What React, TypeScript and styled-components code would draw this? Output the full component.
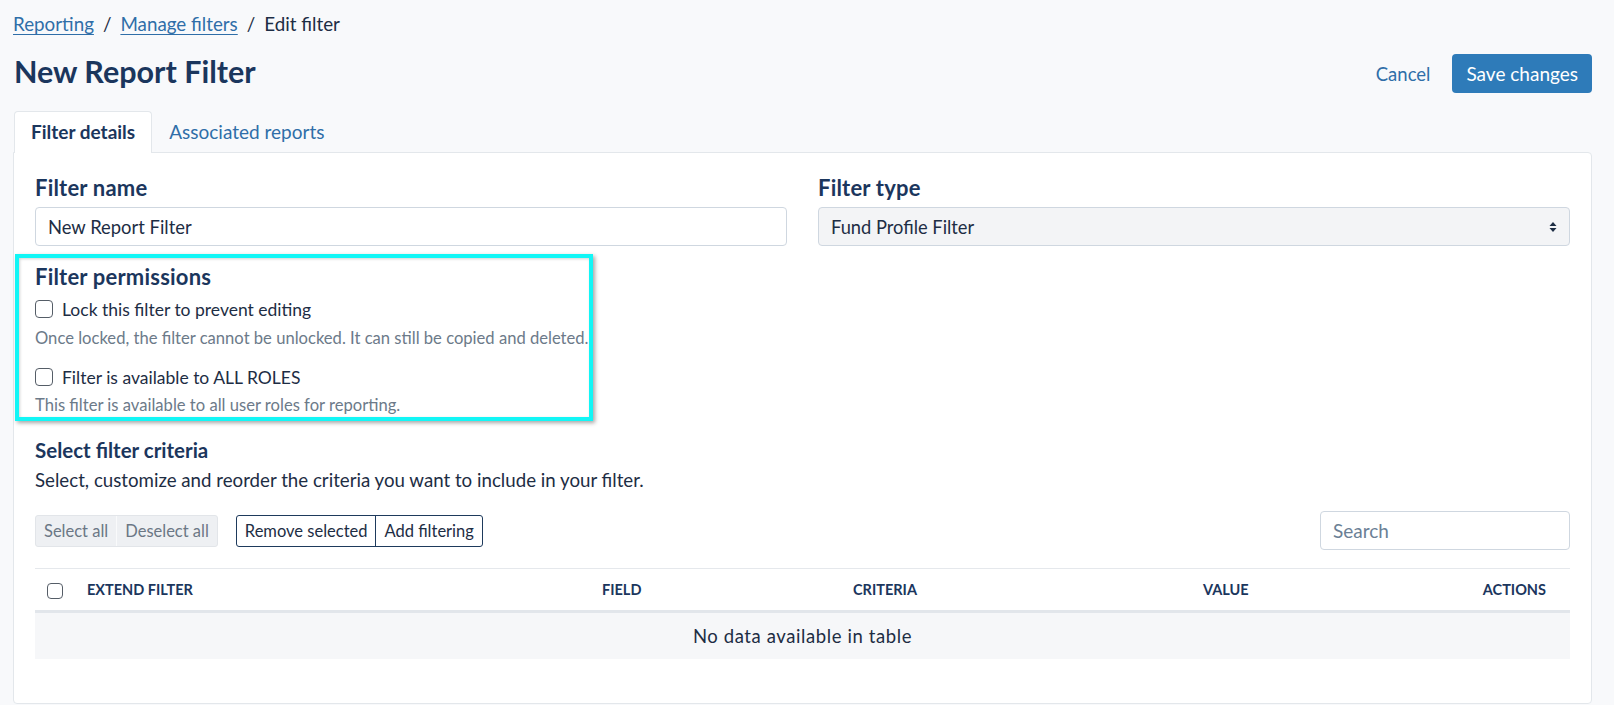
import React from 'react';
import styled, { createGlobalStyle } from 'styled-components';

const navy = '#1b365d';
const ink = '#1d2d44';
const link = '#2f6ea8';
const muted = '#6c7a89';
const line = '#e3e7eb';

const GlobalStyle = createGlobalStyle`
  body {
    margin: 0;
    background: #f8f9fb;
    font-family: Lato, "Open Sans", Arial, sans-serif;
    color: ${ink};
  }
  * {
    box-sizing: border-box;
  }
`;

const Page = styled.div`
  padding: 13px 22px 0 13px;
`;

const Crumbs = styled.nav`
  font-size: 18.8px;
  line-height: 22px;
  color: ${ink};
`;

const CrumbLink = styled.a`
  color: ${link};
  text-decoration: underline;
  text-underline-offset: 3px;
`;

const CrumbSep = styled.span`
  margin: 0 9px;
`;

const HeaderRow = styled.div`
  display: flex;
  justify-content: space-between;
  align-items: flex-start;
  margin-top: 18px;
`;

const Title = styled.h1`
  margin: 0;
  padding-left: 1px;
  font-size: 30.5px;
  line-height: 36px;
  font-weight: 700;
  color: ${navy};
`;

const Actions = styled.div`
  display: flex;
  align-items: center;
  gap: 22px;
  margin-top: 1px;
`;

const LinkButton = styled.button`
  border: 0;
  background: none;
  padding: 0;
  font: inherit;
  font-size: 18.5px;
  color: ${link};
  cursor: pointer;
`;

const PrimaryButton = styled.button`
  height: 39px;
  padding: 0 14px;
  border: 0;
  border-radius: 4px;
  background: #2e7bb9;
  color: #fff;
  font: inherit;
  font-size: 19px;
  cursor: pointer;
`;

const TabBar = styled.div`
  display: flex;
  margin-top: 18px;
  padding-left: 1px;
`;

const Tab = styled.div<{ $active?: boolean }>`
  position: relative;
  z-index: 1;
  height: 42px;
  margin-bottom: -1px;
  padding: 0 16px;
  line-height: 40px;
  font-size: 19px;
  border: 1px solid ${({ $active }) => ($active ? line : 'transparent')};
  border-bottom: 0;
  border-radius: 4px 4px 0 0;
  background: ${({ $active }) => ($active ? '#fff' : 'transparent')};
  color: ${({ $active }) => ($active ? navy : link)};
  font-weight: ${({ $active }) => ($active ? 700 : 400)};
`;

const Panel = styled.div`
  background: #fff;
  border: 1px solid ${line};
  border-radius: 0 4px 4px 4px;
  padding: 23px 21px 44px;
`;

const FieldRow = styled.div`
  display: grid;
  grid-template-columns: 1fr 1fr;
  column-gap: 31px;
`;

const Label = styled.div<{ $gap?: number }>`
  font-size: 22px;
  letter-spacing: 0.2px;
  line-height: 24px;
  font-weight: 700;
  color: ${navy};
  margin-bottom: ${({ $gap = 7 }) => $gap}px;
`;

const TextInput = styled.input`
  width: 100%;
  height: 39px;
  padding: 0 12px;
  border: 1px solid #cfd7e0;
  border-radius: 4px;
  background: #fff;
  font: inherit;
  font-size: 18.4px;
  color: ${ink};
  outline: none;

  &::placeholder {
    color: #6b7f95;
  }
`;

const SelectBox = styled.div`
  display: flex;
  align-items: center;
  justify-content: space-between;
  height: 39px;
  padding: 0 12px;
  border: 1px solid #cfd7e0;
  border-radius: 4px;
  background: #f3f4f6;
  font-size: 18.3px;
  color: ${ink};
`;

/* cyan outline drawn around the permissions block */
const Highlight = styled.div`
  width: 578px;
  margin: 8px 0 0 -20px;
  padding: 7px 0 2px 16px;
  border: 4px solid #12f6f6;
  box-shadow: 2px 2px 4px rgba(0, 0, 0, 0.35), inset 1px 1px 3px rgba(0, 0, 0, 0.18);
`;

const CheckRow = styled.label<{ $top: number }>`
  display: flex;
  align-items: center;
  gap: 9px;
  height: 24px;
  font-size: 17.5px;
  color: ${ink};
  margin-top: ${({ $top }) => $top}px;
`;

const Box = styled.span<{ $size: number }>`
  display: inline-block;
  flex: none;
  width: ${({ $size }) => $size}px;
  height: ${({ $size }) => $size}px;
  border: 1.5px solid #555d67;
  border-radius: 4px;
  background: #fff;
  vertical-align: middle;
`;

const Help = styled.div<{ $top: number }>`
  margin-top: ${({ $top }) => $top}px;
  font-size: 16.6px;
  line-height: 20px;
  color: ${muted};
`;

const SectionTitle = styled.div`
  margin-top: 18px;
  font-size: 20.5px;
  line-height: 22px;
  font-weight: 700;
  color: ${navy};
`;

const Lead = styled.p`
  margin: 7px 0 0;
  font-size: 18.7px;
  line-height: 24px;
  color: ${ink};
`;

const Toolbar = styled.div`
  display: flex;
  align-items: center;
  gap: 18px;
  height: 39px;
  margin-top: 19px;
`;

const Group = styled.div<{ $outlined?: boolean }>`
  display: flex;
  height: 32px;
  border: 1px solid ${({ $outlined }) => ($outlined ? '#1e3a5c' : '#e2e5e9')};
  border-radius: 3px;
  overflow: hidden;
  background: ${({ $outlined }) => ($outlined ? '#fff' : '#eef0f3')};
`;

const GroupButton = styled.button<{ $outlined?: boolean; $divider?: boolean }>`
  height: 100%;
  padding: 0 8px;
  border: 0;
  border-left: ${({ $divider, $outlined }) =>
    $divider ? `1px solid ${$outlined ? '#1e3a5c' : '#f9fafb'}` : '0'};
  background: none;
  font: inherit;
  font-size: 16.5px;
  color: ${({ $outlined }) => ($outlined ? ink : '#6b7785')};
  cursor: pointer;
`;

const SearchField = styled(TextInput)`
  width: 250px;
  margin-left: auto;
  font-size: 19px;
`;

const Table = styled.table`
  width: 100%;
  margin-top: 18px;
  border-collapse: collapse;
  table-layout: fixed;
`;

const HeadRow = styled.tr`
  border-top: 1px solid #e5e8ec;
  border-bottom: 3px solid #e2e6eb;
`;

const Th = styled.th<{ $align?: string }>`
  height: 43px;
  padding: 0 12px;
  padding-right: ${({ $align }) => ($align === 'right' ? '24px' : '12px')};
  text-align: ${({ $align }) => $align || 'left'};
  font-size: 14.5px;
  font-weight: 700;
  text-transform: uppercase;
  color: ${navy};
  vertical-align: middle;
`;

const EmptyCell = styled.td`
  height: 47px;
  background: #f6f7f9;
  text-align: center;
  font-size: 18.5px;
  letter-spacing: 0.6px;
  color: ${ink};
`;

const SortArrows = () => (
  <svg width="8" height="12" viewBox="0 0 8 12" aria-hidden="true">
    <path d="M4 1 L7.5 5 H0.5 Z" fill="#1d2d44" />
    <path d="M4 11 L7.5 7 H0.5 Z" fill="#1d2d44" />
  </svg>
);

const columns = [
  { label: 'Extend filter', width: 515 },
  { label: 'Field', width: 251 },
  { label: 'Criteria', width: 350 },
  { label: 'Value', width: 200 },
];

export default function App() {
  return (
    <Page>
      <GlobalStyle />
      <Crumbs>
        <CrumbLink href="#">Reporting</CrumbLink>
        <CrumbSep>/</CrumbSep>
        <CrumbLink href="#">Manage filters</CrumbLink>
        <CrumbSep>/</CrumbSep>
        <span>Edit filter</span>
      </Crumbs>

      <HeaderRow>
        <Title>New Report Filter</Title>
        <Actions>
          <LinkButton>Cancel</LinkButton>
          <PrimaryButton>Save changes</PrimaryButton>
        </Actions>
      </HeaderRow>

      <TabBar>
        <Tab $active>Filter details</Tab>
        <Tab>Associated reports</Tab>
      </TabBar>

      <Panel>
        <FieldRow>
          <div>
            <Label>Filter name</Label>
            <TextInput defaultValue="New Report Filter" />
          </div>
          <div>
            <Label>Filter type</Label>
            <SelectBox>
              <span>Fund Profile Filter</span>
              <SortArrows />
            </SelectBox>
          </div>
        </FieldRow>

        <Highlight>
          <Label $gap={0}>Filter permissions</Label>
          <CheckRow $top={8}>
            <Box $size={18} />
            Lock this filter to prevent editing
          </CheckRow>
          <Help $top={7}>Once locked, the filter cannot be unlocked. It can still be copied and deleted.</Help>
          <CheckRow $top={17}>
            <Box $size={18} />
            Filter is available to ALL ROLES
          </CheckRow>
          <Help $top={6}>This filter is available to all user roles for reporting.</Help>
        </Highlight>

        <SectionTitle>Select filter criteria</SectionTitle>
        <Lead>Select, customize and reorder the criteria you want to include in your filter.</Lead>

        <Toolbar>
          <Group>
            <GroupButton>Select all</GroupButton>
            <GroupButton $divider>Deselect all</GroupButton>
          </Group>
          <Group $outlined>
            <GroupButton $outlined>Remove selected</GroupButton>
            <GroupButton $outlined $divider>Add filtering</GroupButton>
          </Group>
          <SearchField placeholder="Search" />
        </Toolbar>

        <Table>
          <colgroup>
            <col style={{ width: 40 }} />
            {columns.map((c) => (
              <col key={c.label} style={{ width: c.width }} />
            ))}
            <col />
          </colgroup>
          <thead>
            <HeadRow>
              <Th>
                <Box $size={16} />
              </Th>
              {columns.map((c) => (
                <Th key={c.label}>{c.label}</Th>
              ))}
              <Th $align="right">Actions</Th>
            </HeadRow>
          </thead>
          <tbody>
            <tr>
              <EmptyCell colSpan={6}>No data available in table</EmptyCell>
            </tr>
          </tbody>
        </Table>
      </Panel>
    </Page>
  );
}
